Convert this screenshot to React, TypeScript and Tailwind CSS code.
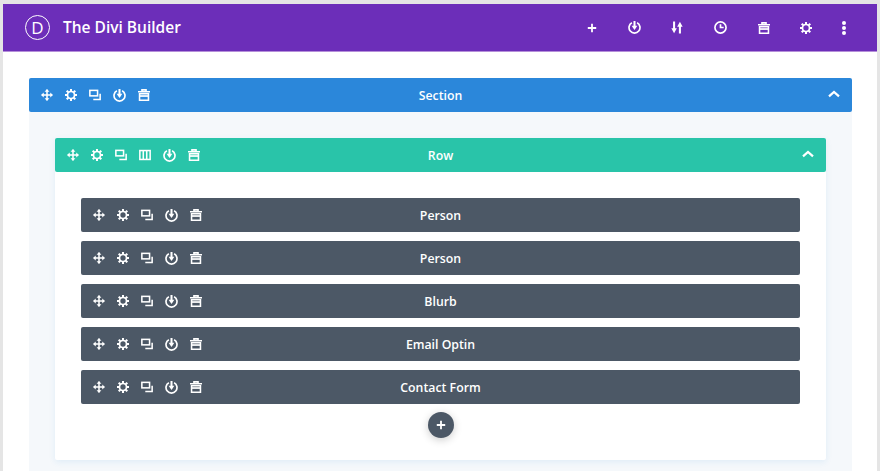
const stroke = { fill: "none", stroke: "currentColor", strokeWidth: 1.8 };

function Move() {
  return (
    <svg width="12" height="12" viewBox="0 0 14 14">
      <path d="M7 1v12M1 7h12" {...stroke} />
      <path d="M7 0l2.8 3.2H4.2zM7 14l2.8-3.2H4.2zM0 7l3.2-2.8v5.6zM14 7l-3.2-2.8v5.6z" fill="currentColor" />
    </svg>
  );
}

function Gear() {
  return (
    <svg width="12" height="12" viewBox="0 0 14 14">
      <circle cx="7" cy="7" r="4.1" fill="none" stroke="currentColor" strokeWidth="2" />
      <path d="M7 0v2.6M7 11.4V14M0 7h2.6M11.4 7H14M2 2l1.9 1.9M10.1 10.1L12 12M2 12l1.9-1.9M10.1 3.9L12 2" fill="none" stroke="currentColor" strokeWidth="2.4" />
    </svg>
  );
}

function Copy() {
  return (
    <svg width="12" height="12" viewBox="0 0 14 14">
      <rect x="1" y="1.6" width="9" height="6.4" {...stroke} />
      <path d="M13 5.5v6.8H5" {...stroke} />
    </svg>
  );
}

function Power() {
  return (
    <svg width="13" height="13" viewBox="0 0 14 14">
      <path d="M4.2 1.9a5.9 5.9 0 1 0 5.6 0" {...stroke} />
      <path d="M7 0v6" fill="none" stroke="currentColor" strokeWidth="2.2" />
      <path d="M3.9 5.2h6.2L7 9.6z" fill="currentColor" />
    </svg>
  );
}

function Trash() {
  return (
    <svg width="12" height="12" viewBox="0 0 14 14">
      <path d="M0 3.2h14M4.6 3V1h4.8v2" {...stroke} />
      <path d="M1.8 5.6h10.4v7.5H1.8z" {...stroke} />
      <path d="M1.8 8.2h10.4" fill="none" stroke="currentColor" strokeWidth="2" />
    </svg>
  );
}

function Columns() {
  return (
    <svg width="12" height="12" viewBox="0 0 14 14">
      <rect x="1" y="1.8" width="12" height="10.4" {...stroke} />
      <path d="M5 2v10M9 2v10" {...stroke} />
    </svg>
  );
}

function Sort() {
  return (
    <svg width="12" height="13" viewBox="0 0 14 14">
      <path d="M3.6 0v9M10.4 14V5" {...stroke} strokeWidth={2.4} />
      <path d="M.4 8h6.4L3.6 13.8zM7.2 6h6.4L10.4.2z" fill="currentColor" />
    </svg>
  );
}

function Clock() {
  return (
    <svg width="13" height="13" viewBox="0 0 14 14">
      <circle cx="7" cy="7" r="6" {...stroke} />
      <path d="M7 3.4V7h3.4" {...stroke} />
    </svg>
  );
}

function Plus({ size = 10 }: { size?: number }) {
  return (
    <svg width={size} height={size} viewBox="0 0 10 10">
      <path d="M5 .8v8.4M.8 5h8.4" fill="none" stroke="currentColor" strokeWidth="1.8" />
    </svg>
  );
}

function Dots() {
  return (
    <svg className="-ml-px" width="4" height="14" viewBox="0 0 4 14">
      <circle cx="2" cy="2" r="2" fill="currentColor" />
      <circle cx="2" cy="7" r="2" fill="currentColor" />
      <circle cx="2" cy="12" r="2" fill="currentColor" />
    </svg>
  );
}

function Chevron() {
  return (
    <svg width="12" height="8" viewBox="0 0 12 8">
      <path d="M1 6.4l5-4.4 5 4.4" fill="none" stroke="currentColor" strokeWidth="2.2" />
    </svg>
  );
}

function ToolBar({ columns }: { columns?: boolean }) {
  return (
    <div className="absolute left-[12px] top-0 flex h-full items-center gap-[12px]">
      <Move />
      <Gear />
      <Copy />
      {columns && <Columns />}
      <Power />
      <Trash />
    </div>
  );
}

function Bar({ label, color, columns, chevron }: { label: string; color: string; columns?: boolean; chevron?: boolean }) {
  return (
    <div className={`relative flex h-[34px] items-center justify-center rounded-[2px] pt-[2px] text-[12.3px] font-semibold text-white ${color}`}>
      <ToolBar columns={columns} />
      <span>{label}</span>
      {chevron && (
        <span className="absolute right-[12px] top-[12px] flex">
          <Chevron />
        </span>
      )}
    </div>
  );
}

const modules = ["Person", "Person", "Blurb", "Email Optin", "Contact Form"];

export default function App() {
  return (
    <div className="h-[471px] overflow-hidden bg-[#e5e5e5] pl-[3px] pr-[3px] pt-[4px] font-['Open_Sans',sans-serif]">
      <header className="flex h-[48px] items-center justify-between border-b border-[#b58fd9] bg-[#6c2eb9] pl-[22px] pr-[31px] text-white">
        <div className="flex items-center gap-[13px]">
          <span className="flex h-[25px] w-[25px] items-center justify-center rounded-full border-[1.5px] border-white text-[17px] leading-none">D</span>
          <span className="text-[15.5px] font-semibold">The Divi Builder</span>
        </div>
        <div className="flex items-center gap-[30.7px]">
          <Plus />
          <Power />
          <Sort />
          <Clock />
          <Trash />
          <Gear />
          <Dots />
        </div>
      </header>

      <main className="h-full bg-white pl-[26px] pr-[25px] pt-[26px]">
        <div className="h-full rounded-t-[2px] bg-[#f5f8fb]">
          <Bar label="Section" color="bg-[#2b87da]" chevron />
          <div className="px-[26px] pt-[26px]">
            <div className="h-[322px] rounded-[2px] bg-white shadow-[0_2px_6px_rgba(43,135,218,0.1)]">
              <Bar label="Row" color="bg-[#29c4a9]" columns chevron />
              <div className="flex flex-col gap-[9px] px-[26px] pt-[26px]">
                {modules.map((name, i) => (
                  <Bar key={i} label={name} color="bg-[#4c5866]" />
                ))}
              </div>
              <div className="mt-[8px] flex justify-center">
                <button className="flex h-[26px] w-[26px] items-center justify-center rounded-full bg-[#4c5866] text-white shadow-[0_2px_8px_rgba(0,0,0,0.2)]">
                  <Plus size={10} />
                </button>
              </div>
            </div>
          </div>
        </div>
      </main>
    </div>
  );
}
